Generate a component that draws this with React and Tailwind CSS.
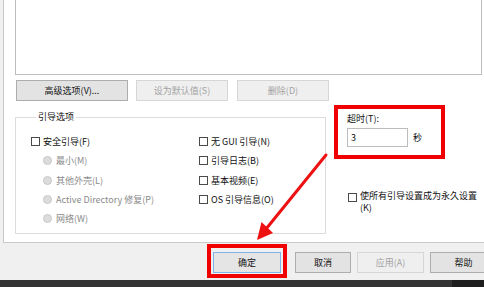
import React from 'react'

const font = { fontFamily: '"Noto Sans CJK SC", "Noto Sans", sans-serif' }

const Btn = ({ children, className = '', disabled = false, focused = false }) => (
  <div
    className={
      'flex h-[21px] shrink-0 items-center justify-center border text-[9px] ' +
      (disabled
        ? 'border-[#d6d6d6] bg-[#efefef] text-[#a3a3a3] '
        : focused
        ? 'border-[#7eb4ea] bg-[#e5e5e5] text-[#111111] '
        : 'border-[#adadad] bg-[#e3e3e3] text-[#111111] ') +
      className
    }
  >
    {children}
  </div>
)

const Check = ({ label }) => (
  <div className="flex h-[19.3px] items-center">
    <span className="h-[9px] w-[9px] border border-[#4a4a4a] bg-white" />
    <span className="ml-[3px] text-[9px] leading-none text-[#111111]">{label}</span>
  </div>
)

const Radio = ({ label }) => (
  <div className="flex h-[19.3px] items-center pl-[12px]">
    <span className="h-[9px] w-[9px] rounded-full border border-[#c8c8c8] bg-[#dcdcdc]" />
    <span className="ml-[4px] text-[9px] leading-none text-[#8a8a8a]">{label}</span>
  </div>
)

export default function App() {
  return (
    <div className="relative h-[287px] w-[484px] overflow-hidden bg-[#f0f0f0]" style={font}>
      <div className="flex h-[243px]">
        <div className="w-[3px] bg-[#f0f0f0]" />
        <div className="flex-1 border-b border-l border-[#c9c9c9] bg-white pl-[11px]">
          {/* list box */}
          <div className="h-[75px] w-[467px] border-b border-l border-r border-[#bdbdbd] bg-white" />

          {/* buttons */}
          <div className="mt-[5px] flex">
            <Btn className="ml-[1px] w-[112px]">高级选项(V)...</Btn>
            <Btn disabled className="ml-[8px] w-[92px]">设为默认值(S)</Btn>
            <Btn disabled className="ml-[9px] w-[92px]">删除(D)</Btn>
          </div>

          <div className="mt-[4px] flex">
            {/* group box */}
            <fieldset className="mt-[6px] h-[123px] w-[311px] border border-[#dcdcdc] pl-[15px] pt-[9px]">
              <legend className="ml-[5px] px-[2px] text-[9px] leading-[12px] text-[#111111]">引导选项</legend>
              <div className="flex">
                <div className="w-[168px]">
                  <Check label="安全引导(F)" />
                  <Radio label="最小(M)" />
                  <Radio label="其他外壳(L)" />
                  <Radio label="Active Directory 修复(P)" />
                  <Radio label="网络(W)" />
                </div>
                <div>
                  <Check label="无 GUI 引导(N)" />
                  <Check label="引导日志(B)" />
                  <Check label="基本视频(E)" />
                  <Check label="OS 引导信息(O)" />
                </div>
              </div>
            </fieldset>

            {/* right side */}
            <div className="ml-[8px] flex flex-col">
              <div className="h-[54px] w-[111px] border-[4px] border-[#f00000] pl-[9px] pt-[4px]">
                <div className="text-[9px] leading-[12px] text-[#111111]">超时(T):</div>
                <div className="mt-[3px] flex items-center">
                  <div className="flex h-[19px] w-[61px] items-center border border-[#bcbcbc] bg-white pl-[3px] text-[9px] text-[#111111]">
                    3
                  </div>
                  <span className="ml-[5px] text-[9px] text-[#111111]">秒</span>
                </div>
              </div>
              <div className="ml-[14px] mt-[31px] flex items-start">
                <span className="mt-[3px] h-[9px] w-[9px] shrink-0 border border-[#4a4a4a] bg-white" />
                <span className="ml-[3px] w-[120px] text-[9px] leading-[12px] text-[#111111]">
                  使所有引导设置成为永久设置 (K)
                </span>
              </div>
            </div>
          </div>
        </div>
      </div>

      {/* bottom bar */}
      <div className="flex h-[37px] items-start">
        <div className="ml-[207px] mt-[1px] h-[34px] w-[80px] shrink-0 border-[4px] border-[#f00000] px-[2px] pt-[4px]">
          <Btn focused className="w-full">确定</Btn>
        </div>
        <Btn className="ml-[8px] mt-[9px] w-[56px]">取消</Btn>
        <Btn disabled className="ml-[6px] mt-[9px] w-[67px]">应用(A)</Btn>
        <Btn className="ml-[6px] mt-[9px] w-[67px]">帮助</Btn>
      </div>
      <div className="flex h-[7px]">
        <div className="w-[452px] bg-[#333333]" />
        <div className="flex-1 bg-[#1e1e1e]" />
      </div>

      {/* red arrow annotation */}
      <svg className="pointer-events-none absolute left-0 top-0" width="484" height="287" viewBox="0 0 484 287">
        <line x1="326" y1="155" x2="266" y2="229" stroke="#ee1111" strokeWidth="3" strokeLinecap="round" />
        <polygon points="257,240 273,233 261.5,222" fill="#ee1111" />
      </svg>
    </div>
  )
}
